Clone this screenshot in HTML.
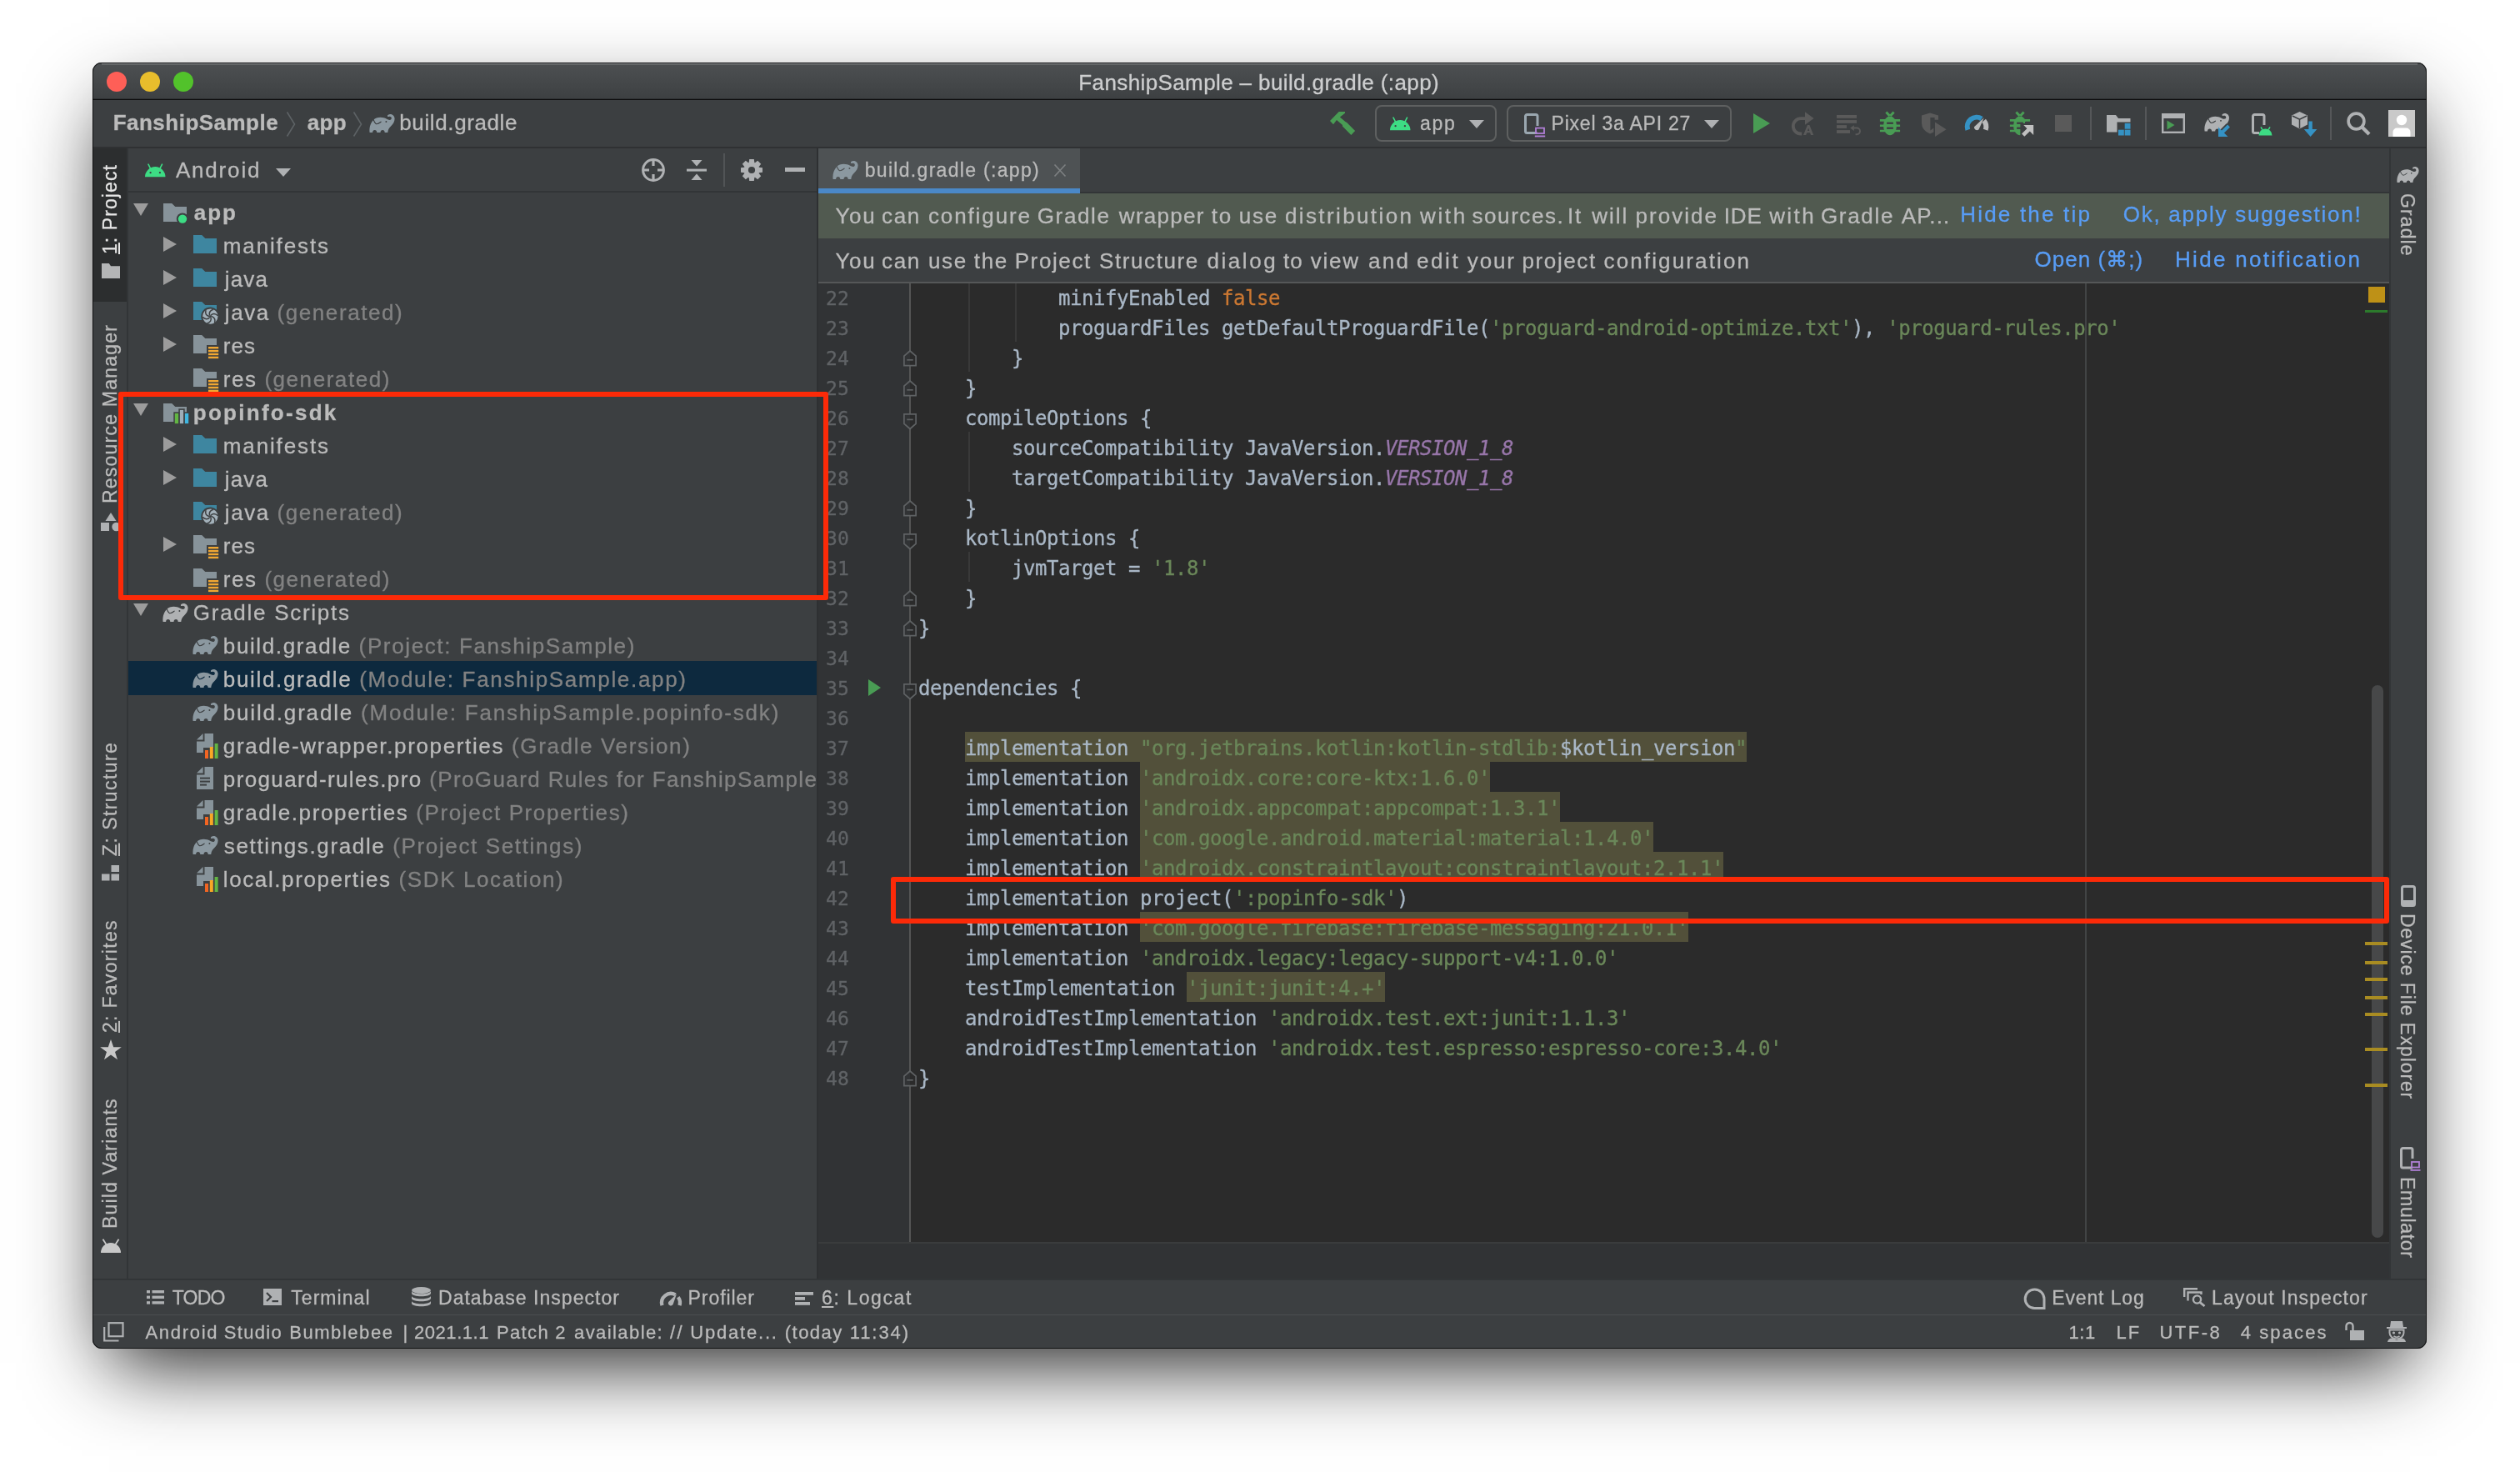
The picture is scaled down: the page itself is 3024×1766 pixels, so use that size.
<!DOCTYPE html>
<html lang="en"><head><meta charset="utf-8"><title>FanshipSample – build.gradle (:app)</title>
<style>
html,body{margin:0;padding:0;background:#ffffff;}
body{width:3024px;height:1766px;position:relative;}
#page{position:absolute;left:0;top:0;width:3024px;height:1766px;overflow:hidden;background:#ffffff;will-change:transform;}
#page div,#page svg{position:absolute;}
#page svg{overflow:visible;}
.t{font-family:"Liberation Sans",sans-serif;line-height:1;white-space:pre;-webkit-text-stroke:0.3px;}
.m{font-family:"DejaVu Sans Mono","Liberation Mono",monospace;letter-spacing:-0.448px;}
.rot{transform-origin:0 0;}
#win{left:111px;top:75px;width:2801px;height:1543px;border-radius:11px;background:#3c3f41;
 box-shadow:0 37px 92px -20px rgba(0,0,0,.9);}
#clip{left:111px;top:75px;width:2801px;height:1543px;border-radius:11px;overflow:hidden;}
#clip>#inner{left:-111px;top:-75px;width:3024px;height:1766px;}
.code{font-family:"DejaVu Sans Mono","Liberation Mono",monospace;font-size:24px;letter-spacing:-0.448px;line-height:36px;height:36px;white-space:pre;color:#a9b7c6;-webkit-text-stroke:0.3px;}
.code span{display:inline-block;height:36px;}
.code .s{color:#6a8759}.code .k{color:#cc7832}.code .p{color:#9876aa;font-style:italic}
.code .h{background:#52503a}
.ln{font-family:"DejaVu Sans Mono","Liberation Mono",monospace;font-size:23px;letter-spacing:0.15px;line-height:36px;height:36px;color:#606366;text-align:right;width:60px;-webkit-text-stroke:0.3px;}

</style></head>
<body>
<div id="page">
<div id="win"></div>
<div id="clip"><div id="inner">
<div style="left:111px;top:75px;width:2801px;height:44px;background:linear-gradient(#4d5052,#3d4042);"></div>
<div style="left:111px;top:118px;width:2801px;height:1px;background:#2e3032;"></div>
<div style="left:111px;top:119px;width:2801px;height:1px;background:#0e0e0e;"></div>
<div style="left:128px;top:86px;width:24px;height:24px;background:#fe5f57;border-radius:50%;"></div>
<div style="left:168px;top:86px;width:24px;height:24px;background:#e8bd2c;border-radius:50%;"></div>
<div style="left:208px;top:86px;width:24px;height:24px;background:#52c22b;border-radius:50%;"></div>
<div class="t " style="left:1294.3px;top:86px;font-size:26px;color:#cdcecf;font-weight:400;letter-spacing:0.389px;">FanshipSample – build.gradle (:app)</div>
<div style="left:111px;top:120px;width:2801px;height:56px;background:#3c3f41;"></div>
<div style="left:111px;top:176px;width:2801px;height:2px;background:#2f3133;"></div>
<div class="t " style="left:135.7px;top:134px;font-size:26px;color:#bbbbbb;font-weight:700;letter-spacing:0.484px;">FanshipSample</div>
<svg style="left:344px;top:134px;" width="10" height="30" viewBox="0 0 10 30"><path d="M0.5 0.5L9.5 15L0.5 29.5" fill="none" stroke="#5d6265" stroke-width="1.6"/></svg>
<div class="t " style="left:368.8px;top:134px;font-size:26px;color:#bbbbbb;font-weight:700;letter-spacing:0.279px;">app</div>
<svg style="left:424px;top:134px;" width="10" height="30" viewBox="0 0 10 30"><path d="M0.5 0.5L9.5 15L0.5 29.5" fill="none" stroke="#5d6265" stroke-width="1.6"/></svg>
<svg style="left:443px;top:137px;" width="31.0" height="22.0" viewBox="0 0 31 22"><path d="M0.6 22C0 17 1 11.5 5 7C8 4 13 3 17.5 4.3C20 5 21.5 6.3 23.5 6.8C25.5 7.3 27 6.2 26.8 4.6C26.6 3 25 2.3 23.6 2.9C22.8 3.2 22 3 21.9 2.2C21.8 1 23.5 0 25.2 0C28.5 0 30.6 2.5 30.6 5.5C30.6 9 28.5 12 26 14.5C23.5 17 22.5 19 22.3 22L18.7 22C18.7 20 17.6 19 16.1 19C14.6 19 13.5 20 13.5 22L9.3 22C9.3 20 8.2 19 6.7 19C5.2 19 4.1 20 4.1 22Z" fill="#8b98a0"/><path d="M5.1 6.5C5.8 8.6 6.8 10.4 8.2 11.6C9.6 12.2 12 10.8 14.1 9.2" fill="none" stroke="#3c3f41" stroke-width="1.1" stroke-linecap="round"/><circle cx="20.4" cy="9" r="0.95" fill="#3c3f41"/></svg>
<div class="t " style="left:479.3px;top:134px;font-size:26px;color:#bbbbbb;font-weight:400;letter-spacing:0.612px;">build.gradle</div>
<div style="left:111px;top:178px;width:42px;height:1357px;background:#3c3f41;"></div>
<div style="left:152px;top:178px;width:2px;height:1357px;background:#323537;"></div>
<div style="left:112px;top:178px;width:40px;height:184px;background:#2c2e2f;"></div>
<div class="t rot" style="left:121px;top:305px;font-size:23px;color:#e6e6e6;letter-spacing:1.082px;transform:rotate(-90deg);"><u>1</u>: Project</div>
<svg style="left:122px;top:316px;" width="22" height="18" viewBox="0 0 22 18"><path d="M0 0H8.8L11 3.2H22V18H0Z" fill="#b4b5b6"/></svg>
<div class="t rot" style="left:121px;top:604.3px;font-size:23px;color:#bbbbbb;letter-spacing:1.224px;transform:rotate(-90deg);">Resource Manager</div>
<svg style="left:121px;top:615px;" width="24" height="22" viewBox="0 0 24 22"><path d="M12 0L18.5 10H5.5Z" fill="#afb1b3"/><rect x="0" y="12" width="10" height="10" fill="#afb1b3"/><circle cx="18.5" cy="17" r="5.2" fill="#afb1b3"/></svg>
<div class="t rot" style="left:121px;top:1026.5px;font-size:23px;color:#bbbbbb;letter-spacing:1.432px;transform:rotate(-90deg);"><u>Z</u>: Structure</div>
<svg style="left:122px;top:1038px;" width="22" height="19" viewBox="0 0 22 19"><rect x="11.5" y="0" width="9.5" height="8" fill="#afb1b3"/><rect x="0" y="10.5" width="9.5" height="8" fill="#afb1b3"/><rect x="11.5" y="10.5" width="9.5" height="8" fill="#afb1b3"/></svg>
<div class="t rot" style="left:121px;top:1239px;font-size:23px;color:#bbbbbb;letter-spacing:1.304px;transform:rotate(-90deg);"><u>2</u>: Favorites</div>
<svg style="left:120px;top:1247px;" width="26" height="25" viewBox="0 0 26 25"><path d="M13 0L16.2 9.2H25.8L18 14.9L21 24.3L13 18.6L5 24.3L8 14.9L0.2 9.2H9.8Z" fill="#c8c8c8"/></svg>
<div class="t rot" style="left:121px;top:1473.7px;font-size:23px;color:#bbbbbb;letter-spacing:1.177px;transform:rotate(-90deg);">Build Variants</div>
<svg style="left:121px;top:1486px;" width="24" height="17" viewBox="0 0 24 17"><path d="M0 17A12 12 0 0 1 24 17Z" fill="#c8c8c8"/><path d="M6.5 7L2.5 0.8M17.5 7L21.5 0.8" stroke="#c8c8c8" stroke-width="1.8" fill="none"/></svg>
<div style="left:154px;top:178px;width:826px;height:1357px;background:#3c3f41;"></div>
<div style="left:154px;top:229px;width:826px;height:2px;background:#323537;"></div>
<svg style="left:174px;top:196px;" width="24.5" height="16.3" viewBox="0 0 24.5 16.3"><path d="M0 16.3A12.25 12.25 0 0 1 24.5 16.3Z" fill="#3ddc84"/><path d="M6.8 6.6L4 1.2M17.7 6.6L20.5 1.2" stroke="#3ddc84" stroke-width="1.6" stroke-linecap="round" fill="none"/><circle cx="6.6" cy="11.2" r="1.15" fill="#3c3f41"/><circle cx="17.9" cy="11.2" r="1.15" fill="#3c3f41"/></svg>
<div class="t " style="left:210.9px;top:191px;font-size:26px;color:#bbbbbb;font-weight:400;letter-spacing:1.824px;">Android</div>
<svg style="left:331px;top:202px;" width="18" height="10" viewBox="0 0 18 10"><path d="M0 0H18L9.0 10Z" fill="#afb1b3"/></svg>
<svg style="left:770px;top:190px;" width="28" height="28" viewBox="0 0 28 28"><circle cx="14" cy="14" r="12.4" fill="none" stroke="#afb1b3" stroke-width="3"/><path d="M14 1V9M14 19V27M1 14H9M19 14H27" stroke="#afb1b3" stroke-width="3.2" fill="none"/></svg>
<svg style="left:824px;top:192px;" width="24" height="24" viewBox="0 0 24 24"><path d="M5.5 0H18.5L12 7.5Z" fill="#afb1b3"/><rect x="0" y="10.6" width="24" height="3" fill="#afb1b3"/><path d="M5.5 24H18.5L12 16.5Z" fill="#afb1b3"/></svg>
<div style="left:868px;top:184px;width:2px;height:40px;background:#515456;"></div>
<svg style="left:889px;top:191px;" width="26" height="26" viewBox="0 0 26 26"><g fill="#afb1b3"><circle cx="13" cy="13" r="9.4"/><path d="M10.2 0H15.8L16.6 6H9.4Z" transform="rotate(0 13 13)"/><path d="M10.2 0H15.8L16.6 6H9.4Z" transform="rotate(45 13 13)"/><path d="M10.2 0H15.8L16.6 6H9.4Z" transform="rotate(90 13 13)"/><path d="M10.2 0H15.8L16.6 6H9.4Z" transform="rotate(135 13 13)"/><path d="M10.2 0H15.8L16.6 6H9.4Z" transform="rotate(180 13 13)"/><path d="M10.2 0H15.8L16.6 6H9.4Z" transform="rotate(225 13 13)"/><path d="M10.2 0H15.8L16.6 6H9.4Z" transform="rotate(270 13 13)"/><path d="M10.2 0H15.8L16.6 6H9.4Z" transform="rotate(315 13 13)"/></g><circle cx="13" cy="13" r="4.1" fill="#3c3f41"/></svg>
<div style="left:942px;top:201px;width:24px;height:5px;background:#afb1b3;"></div>
<div style="left:154px;top:793px;width:826px;height:41px;background:#0d293e;"></div>
<div style="left:154px;top:231px;width:826px;height:1304px;overflow:hidden;"><div style="left:-154px;top:-231px;width:3024px;height:1766px;">
<svg style="left:160px;top:244px;" width="18" height="15" viewBox="0 0 18 15"><path d="M0 0H18L9.0 15Z" fill="#9c9c9c"/></svg>
<svg style="left:196px;top:244px;" width="30" height="26" viewBox="0 0 30 26"><path d="M0 0H10.2L14.3 4H28V22H0Z" fill="#87939a"/><circle cx="23" cy="18.6" r="7.2" fill="#3c3f41"/><circle cx="23" cy="18.6" r="5.2" fill="#3ddc84"/></svg>
<div class="t " style="left:232.8px;top:242px;font-size:26px;color:#bbbbbb;font-weight:700;letter-spacing:1.929px;">app</div>
<svg style="left:196px;top:284px;" width="16" height="18" viewBox="0 0 16 18"><path d="M0 0L16 9.0L0 18Z" fill="#9c9c9c"/></svg>
<svg style="left:232px;top:282px;" width="28" height="22" viewBox="0 0 28 22"><path d="M0 0H10.2L14.3 4H28V22H0Z" fill="#3e86a0"/></svg>
<div class="t " style="left:267.8px;top:282px;font-size:26px;color:#bbbbbb;font-weight:400;letter-spacing:1.867px;">manifests</div>
<svg style="left:196px;top:324px;" width="16" height="18" viewBox="0 0 16 18"><path d="M0 0L16 9.0L0 18Z" fill="#9c9c9c"/></svg>
<svg style="left:232px;top:322px;" width="28" height="22" viewBox="0 0 28 22"><path d="M0 0H10.2L14.3 4H28V22H0Z" fill="#3e86a0"/></svg>
<div class="t " style="left:269.8px;top:322px;font-size:26px;color:#bbbbbb;font-weight:400;letter-spacing:1.155px;">java</div>
<svg style="left:196px;top:364px;" width="16" height="18" viewBox="0 0 16 18"><path d="M0 0L16 9.0L0 18Z" fill="#9c9c9c"/></svg>
<svg style="left:232px;top:362px;" width="31" height="28" viewBox="0 0 31 28"><path d="M0 0H10.2L14.3 4H28V22H0Z" fill="#3e86a0"/><circle cx="20.3" cy="17.6" r="11.0" fill="#3c3f41"/><circle cx="20.3" cy="17.6" r="9.2" fill="#a3b1ba"/><path d="M21.50 17.60Q27.10 18.80 25.58 25.14" fill="none" stroke="#3c3f41" stroke-width="1.5"/><path d="M20.90 18.64Q22.66 24.08 16.41 25.94" fill="none" stroke="#3c3f41" stroke-width="1.5"/><path d="M19.70 18.64Q15.86 22.89 11.14 18.40" fill="none" stroke="#3c3f41" stroke-width="1.5"/><path d="M19.10 17.60Q13.50 16.40 15.02 10.06" fill="none" stroke="#3c3f41" stroke-width="1.5"/><path d="M19.70 16.56Q17.94 11.12 24.19 9.26" fill="none" stroke="#3c3f41" stroke-width="1.5"/><path d="M20.90 16.56Q24.74 12.31 29.46 16.80" fill="none" stroke="#3c3f41" stroke-width="1.5"/><circle cx="20.3" cy="17.6" r="1.3" fill="#3c3f41"/></svg>
<div class="t " style="left:269.8px;top:362px;font-size:26px;color:#bbbbbb;font-weight:400;letter-spacing:1.568px;">java <span style="color:#828282">(generated)</span></div>
<svg style="left:196px;top:404px;" width="16" height="18" viewBox="0 0 16 18"><path d="M0 0L16 9.0L0 18Z" fill="#9c9c9c"/></svg>
<svg style="left:232px;top:402px;" width="32" height="30" viewBox="0 0 32 30"><path d="M0 0H10.2L14.3 4H28V22H0Z" fill="#87939a"/><rect x="16" y="12" width="16" height="16" fill="#3c3f41"/><rect x="18" y="14.0" width="12.2" height="2.4" fill="#f0a732"/><rect x="18" y="17.9" width="12.2" height="2.4" fill="#f0a732"/><rect x="18" y="21.8" width="12.2" height="2.4" fill="#f0a732"/><rect x="18" y="25.7" width="12.2" height="2.4" fill="#f0a732"/></svg>
<div class="t " style="left:267.8px;top:402px;font-size:26px;color:#bbbbbb;font-weight:400;letter-spacing:0.991px;">res</div>
<svg style="left:232px;top:442px;" width="32" height="30" viewBox="0 0 32 30"><path d="M0 0H10.2L14.3 4H28V22H0Z" fill="#87939a"/><rect x="16" y="12" width="16" height="16" fill="#3c3f41"/><rect x="18" y="14.0" width="12.2" height="2.4" fill="#f0a732"/><rect x="18" y="17.9" width="12.2" height="2.4" fill="#f0a732"/><rect x="18" y="21.8" width="12.2" height="2.4" fill="#f0a732"/><rect x="18" y="25.7" width="12.2" height="2.4" fill="#f0a732"/></svg>
<div class="t " style="left:267.8px;top:442px;font-size:26px;color:#bbbbbb;font-weight:400;letter-spacing:1.557px;">res <span style="color:#828282">(generated)</span></div>
<svg style="left:160px;top:484px;" width="18" height="15" viewBox="0 0 18 15"><path d="M0 0H18L9.0 15Z" fill="#9c9c9c"/></svg>
<svg style="left:196px;top:484px;" width="32" height="26" viewBox="0 0 32 26"><path d="M0 0H10.2L14.3 4H28V22H0Z" fill="#87939a"/><rect x="12.3" y="10.3" width="20" height="15" fill="#3c3f41"/><rect x="18.3" y="6.3" width="7.4" height="6" fill="#3c3f41"/><rect x="13.8" y="11.9" width="4.3" height="12.2" fill="#62b543"/><rect x="19.9" y="7.9" width="4.2" height="16.2" fill="#9fadb7"/><rect x="25.9" y="11.9" width="4.3" height="12.2" fill="#40b6e0"/></svg>
<div class="t " style="left:231.8px;top:482px;font-size:26px;color:#bbbbbb;font-weight:700;letter-spacing:2.271px;">popinfo-sdk</div>
<svg style="left:196px;top:524px;" width="16" height="18" viewBox="0 0 16 18"><path d="M0 0L16 9.0L0 18Z" fill="#9c9c9c"/></svg>
<svg style="left:232px;top:522px;" width="28" height="22" viewBox="0 0 28 22"><path d="M0 0H10.2L14.3 4H28V22H0Z" fill="#3e86a0"/></svg>
<div class="t " style="left:267.8px;top:522px;font-size:26px;color:#bbbbbb;font-weight:400;letter-spacing:1.867px;">manifests</div>
<svg style="left:196px;top:564px;" width="16" height="18" viewBox="0 0 16 18"><path d="M0 0L16 9.0L0 18Z" fill="#9c9c9c"/></svg>
<svg style="left:232px;top:562px;" width="28" height="22" viewBox="0 0 28 22"><path d="M0 0H10.2L14.3 4H28V22H0Z" fill="#3e86a0"/></svg>
<div class="t " style="left:269.8px;top:562px;font-size:26px;color:#bbbbbb;font-weight:400;letter-spacing:1.155px;">java</div>
<svg style="left:232px;top:602px;" width="31" height="28" viewBox="0 0 31 28"><path d="M0 0H10.2L14.3 4H28V22H0Z" fill="#3e86a0"/><circle cx="20.3" cy="17.6" r="11.0" fill="#3c3f41"/><circle cx="20.3" cy="17.6" r="9.2" fill="#a3b1ba"/><path d="M21.50 17.60Q27.10 18.80 25.58 25.14" fill="none" stroke="#3c3f41" stroke-width="1.5"/><path d="M20.90 18.64Q22.66 24.08 16.41 25.94" fill="none" stroke="#3c3f41" stroke-width="1.5"/><path d="M19.70 18.64Q15.86 22.89 11.14 18.40" fill="none" stroke="#3c3f41" stroke-width="1.5"/><path d="M19.10 17.60Q13.50 16.40 15.02 10.06" fill="none" stroke="#3c3f41" stroke-width="1.5"/><path d="M19.70 16.56Q17.94 11.12 24.19 9.26" fill="none" stroke="#3c3f41" stroke-width="1.5"/><path d="M20.90 16.56Q24.74 12.31 29.46 16.80" fill="none" stroke="#3c3f41" stroke-width="1.5"/><circle cx="20.3" cy="17.6" r="1.3" fill="#3c3f41"/></svg>
<div class="t " style="left:269.8px;top:602px;font-size:26px;color:#bbbbbb;font-weight:400;letter-spacing:1.568px;">java <span style="color:#828282">(generated)</span></div>
<svg style="left:196px;top:644px;" width="16" height="18" viewBox="0 0 16 18"><path d="M0 0L16 9.0L0 18Z" fill="#9c9c9c"/></svg>
<svg style="left:232px;top:642px;" width="32" height="30" viewBox="0 0 32 30"><path d="M0 0H10.2L14.3 4H28V22H0Z" fill="#87939a"/><rect x="16" y="12" width="16" height="16" fill="#3c3f41"/><rect x="18" y="14.0" width="12.2" height="2.4" fill="#f0a732"/><rect x="18" y="17.9" width="12.2" height="2.4" fill="#f0a732"/><rect x="18" y="21.8" width="12.2" height="2.4" fill="#f0a732"/><rect x="18" y="25.7" width="12.2" height="2.4" fill="#f0a732"/></svg>
<div class="t " style="left:267.8px;top:642px;font-size:26px;color:#bbbbbb;font-weight:400;letter-spacing:0.991px;">res</div>
<svg style="left:232px;top:682px;" width="32" height="30" viewBox="0 0 32 30"><path d="M0 0H10.2L14.3 4H28V22H0Z" fill="#87939a"/><rect x="16" y="12" width="16" height="16" fill="#3c3f41"/><rect x="18" y="14.0" width="12.2" height="2.4" fill="#f0a732"/><rect x="18" y="17.9" width="12.2" height="2.4" fill="#f0a732"/><rect x="18" y="21.8" width="12.2" height="2.4" fill="#f0a732"/><rect x="18" y="25.7" width="12.2" height="2.4" fill="#f0a732"/></svg>
<div class="t " style="left:267.8px;top:682px;font-size:26px;color:#bbbbbb;font-weight:400;letter-spacing:1.557px;">res <span style="color:#828282">(generated)</span></div>
<svg style="left:160px;top:724px;" width="18" height="15" viewBox="0 0 18 15"><path d="M0 0H18L9.0 15Z" fill="#9c9c9c"/></svg>
<svg style="left:195px;top:723.5px;" width="31.0" height="22.0" viewBox="0 0 31 22"><path d="M0.6 22C0 17 1 11.5 5 7C8 4 13 3 17.5 4.3C20 5 21.5 6.3 23.5 6.8C25.5 7.3 27 6.2 26.8 4.6C26.6 3 25 2.3 23.6 2.9C22.8 3.2 22 3 21.9 2.2C21.8 1 23.5 0 25.2 0C28.5 0 30.6 2.5 30.6 5.5C30.6 9 28.5 12 26 14.5C23.5 17 22.5 19 22.3 22L18.7 22C18.7 20 17.6 19 16.1 19C14.6 19 13.5 20 13.5 22L9.3 22C9.3 20 8.2 19 6.7 19C5.2 19 4.1 20 4.1 22Z" fill="#afb1b3"/><path d="M5.1 6.5C5.8 8.6 6.8 10.4 8.2 11.6C9.6 12.2 12 10.8 14.1 9.2" fill="none" stroke="#3c3f41" stroke-width="1.1" stroke-linecap="round"/><circle cx="20.4" cy="9" r="0.95" fill="#3c3f41"/></svg>
<div class="t " style="left:231.8px;top:722px;font-size:26px;color:#bbbbbb;font-weight:400;letter-spacing:1.729px;">Gradle Scripts</div>
<svg style="left:231px;top:763px;" width="31.0" height="22.0" viewBox="0 0 31 22"><path d="M0.6 22C0 17 1 11.5 5 7C8 4 13 3 17.5 4.3C20 5 21.5 6.3 23.5 6.8C25.5 7.3 27 6.2 26.8 4.6C26.6 3 25 2.3 23.6 2.9C22.8 3.2 22 3 21.9 2.2C21.8 1 23.5 0 25.2 0C28.5 0 30.6 2.5 30.6 5.5C30.6 9 28.5 12 26 14.5C23.5 17 22.5 19 22.3 22L18.7 22C18.7 20 17.6 19 16.1 19C14.6 19 13.5 20 13.5 22L9.3 22C9.3 20 8.2 19 6.7 19C5.2 19 4.1 20 4.1 22Z" fill="#8b98a0"/><path d="M5.1 6.5C5.8 8.6 6.8 10.4 8.2 11.6C9.6 12.2 12 10.8 14.1 9.2" fill="none" stroke="#3c3f41" stroke-width="1.1" stroke-linecap="round"/><circle cx="20.4" cy="9" r="0.95" fill="#3c3f41"/></svg>
<div class="t " style="left:267.8px;top:762px;font-size:26px;color:#bbbbbb;font-weight:400;letter-spacing:1.627px;">build.gradle <span style="color:#828282">(Project: FanshipSample)</span></div>
<svg style="left:231px;top:803px;" width="31.0" height="22.0" viewBox="0 0 31 22"><path d="M0.6 22C0 17 1 11.5 5 7C8 4 13 3 17.5 4.3C20 5 21.5 6.3 23.5 6.8C25.5 7.3 27 6.2 26.8 4.6C26.6 3 25 2.3 23.6 2.9C22.8 3.2 22 3 21.9 2.2C21.8 1 23.5 0 25.2 0C28.5 0 30.6 2.5 30.6 5.5C30.6 9 28.5 12 26 14.5C23.5 17 22.5 19 22.3 22L18.7 22C18.7 20 17.6 19 16.1 19C14.6 19 13.5 20 13.5 22L9.3 22C9.3 20 8.2 19 6.7 19C5.2 19 4.1 20 4.1 22Z" fill="#8b98a0"/><path d="M5.1 6.5C5.8 8.6 6.8 10.4 8.2 11.6C9.6 12.2 12 10.8 14.1 9.2" fill="none" stroke="#0d293e" stroke-width="1.1" stroke-linecap="round"/><circle cx="20.4" cy="9" r="0.95" fill="#0d293e"/></svg>
<div class="t " style="left:267.8px;top:802px;font-size:26px;color:#bbbbbb;font-weight:400;letter-spacing:1.672px;">build.gradle <span style="color:#828282">(Module: FanshipSample.app)</span></div>
<svg style="left:231px;top:843px;" width="31.0" height="22.0" viewBox="0 0 31 22"><path d="M0.6 22C0 17 1 11.5 5 7C8 4 13 3 17.5 4.3C20 5 21.5 6.3 23.5 6.8C25.5 7.3 27 6.2 26.8 4.6C26.6 3 25 2.3 23.6 2.9C22.8 3.2 22 3 21.9 2.2C21.8 1 23.5 0 25.2 0C28.5 0 30.6 2.5 30.6 5.5C30.6 9 28.5 12 26 14.5C23.5 17 22.5 19 22.3 22L18.7 22C18.7 20 17.6 19 16.1 19C14.6 19 13.5 20 13.5 22L9.3 22C9.3 20 8.2 19 6.7 19C5.2 19 4.1 20 4.1 22Z" fill="#8b98a0"/><path d="M5.1 6.5C5.8 8.6 6.8 10.4 8.2 11.6C9.6 12.2 12 10.8 14.1 9.2" fill="none" stroke="#3c3f41" stroke-width="1.1" stroke-linecap="round"/><circle cx="20.4" cy="9" r="0.95" fill="#3c3f41"/></svg>
<div class="t " style="left:267.8px;top:842px;font-size:26px;color:#bbbbbb;font-weight:400;letter-spacing:1.819px;">build.gradle <span style="color:#828282">(Module: FanshipSample.popinfo-sdk)</span></div>
<svg style="left:236px;top:880px;" width="27" height="30" viewBox="0 0 27 30"><path d="M9.5 0H20V23H0V9.5H9.5Z" fill="#87939a"/><path d="M7.6 0V7.6H0Z" fill="#87939a"/><rect x="8" y="17" width="19" height="14" fill="#3c3f41"/><rect x="10" y="20" width="4" height="10" fill="#f26522"/><rect x="15.8" y="16" width="4" height="14" fill="#f9a825"/><rect x="14" y="14" width="14" height="3.5" fill="#3c3f41" opacity="0"/><rect x="21.6" y="12" width="4" height="18" fill="#62b543"/></svg>
<div class="t " style="left:267.8px;top:882px;font-size:26px;color:#bbbbbb;font-weight:400;letter-spacing:1.641px;">gradle-wrapper.properties <span style="color:#828282">(Gradle Version)</span></div>
<svg style="left:236px;top:920px;" width="20" height="27" viewBox="0 0 20 27"><path d="M9.5 0H20V27H0V9.5H9.5Z" fill="#87939a"/><path d="M7.6 0V7.6H0Z" fill="#87939a"/><rect x="4" y="12.6" width="12" height="2" fill="#3c3f41"/><rect x="4" y="16.6" width="12" height="2" fill="#3c3f41"/><rect x="4" y="20.6" width="8" height="2" fill="#3c3f41"/></svg>
<div class="t " style="left:267.8px;top:922px;font-size:26px;color:#bbbbbb;font-weight:400;letter-spacing:1.383px;">proguard-rules.pro <span style="color:#828282">(ProGuard Rules for FanshipSample.app)</span></div>
<svg style="left:236px;top:960px;" width="27" height="30" viewBox="0 0 27 30"><path d="M9.5 0H20V23H0V9.5H9.5Z" fill="#87939a"/><path d="M7.6 0V7.6H0Z" fill="#87939a"/><rect x="8" y="17" width="19" height="14" fill="#3c3f41"/><rect x="10" y="20" width="4" height="10" fill="#f26522"/><rect x="15.8" y="16" width="4" height="14" fill="#f9a825"/><rect x="14" y="14" width="14" height="3.5" fill="#3c3f41" opacity="0"/><rect x="21.6" y="12" width="4" height="18" fill="#62b543"/></svg>
<div class="t " style="left:267.8px;top:962px;font-size:26px;color:#bbbbbb;font-weight:400;letter-spacing:1.618px;">gradle.properties <span style="color:#828282">(Project Properties)</span></div>
<svg style="left:231px;top:1003px;" width="31.0" height="22.0" viewBox="0 0 31 22"><path d="M0.6 22C0 17 1 11.5 5 7C8 4 13 3 17.5 4.3C20 5 21.5 6.3 23.5 6.8C25.5 7.3 27 6.2 26.8 4.6C26.6 3 25 2.3 23.6 2.9C22.8 3.2 22 3 21.9 2.2C21.8 1 23.5 0 25.2 0C28.5 0 30.6 2.5 30.6 5.5C30.6 9 28.5 12 26 14.5C23.5 17 22.5 19 22.3 22L18.7 22C18.7 20 17.6 19 16.1 19C14.6 19 13.5 20 13.5 22L9.3 22C9.3 20 8.2 19 6.7 19C5.2 19 4.1 20 4.1 22Z" fill="#8b98a0"/><path d="M5.1 6.5C5.8 8.6 6.8 10.4 8.2 11.6C9.6 12.2 12 10.8 14.1 9.2" fill="none" stroke="#3c3f41" stroke-width="1.1" stroke-linecap="round"/><circle cx="20.4" cy="9" r="0.95" fill="#3c3f41"/></svg>
<div class="t " style="left:268.8px;top:1002px;font-size:26px;color:#bbbbbb;font-weight:400;letter-spacing:1.634px;">settings.gradle <span style="color:#828282">(Project Settings)</span></div>
<svg style="left:236px;top:1040px;" width="27" height="30" viewBox="0 0 27 30"><path d="M9.5 0H20V23H0V9.5H9.5Z" fill="#87939a"/><path d="M7.6 0V7.6H0Z" fill="#87939a"/><rect x="8" y="17" width="19" height="14" fill="#3c3f41"/><rect x="10" y="20" width="4" height="10" fill="#f26522"/><rect x="15.8" y="16" width="4" height="14" fill="#f9a825"/><rect x="14" y="14" width="14" height="3.5" fill="#3c3f41" opacity="0"/><rect x="21.6" y="12" width="4" height="18" fill="#62b543"/></svg>
<div class="t " style="left:267.8px;top:1042px;font-size:26px;color:#bbbbbb;font-weight:400;letter-spacing:1.601px;">local.properties <span style="color:#828282">(SDK Location)</span></div>
</div></div>
<div style="left:980px;top:178px;width:2px;height:1357px;background:#2e3032;"></div>
<svg style="left:1590px;top:130px;" width="40" height="36" viewBox="1590 130 40 36"><path d="M1596 144.9L1600 149.2L1604 144L1611 150V151.6L1621.4 162L1626.1 157.1L1616.2 147L1614.4 146.1L1607.9 140.6L1614 135.7V133.9H1606.7Z" fill="#499c54"/></svg>
<div style="left:1650px;top:126px;width:146px;height:44px;background:transparent;box-sizing:border-box;border:2px solid #5e6060;border-radius:8px;"></div>
<svg style="left:1668px;top:140px;" width="24.5" height="16.3" viewBox="0 0 24.5 16.3"><path d="M0 16.3A12.25 12.25 0 0 1 24.5 16.3Z" fill="#3ddc84"/><path d="M6.8 6.6L4 1.2M17.7 6.6L20.5 1.2" stroke="#3ddc84" stroke-width="1.6" stroke-linecap="round" fill="none"/><circle cx="6.6" cy="11.2" r="1.15" fill="#3c3f41"/><circle cx="17.9" cy="11.2" r="1.15" fill="#3c3f41"/></svg>
<div class="t " style="left:1704px;top:137px;font-size:23px;color:#bbbbbb;font-weight:400;letter-spacing:1.708px;">app</div>
<svg style="left:1763px;top:144px;" width="18" height="10" viewBox="0 0 18 10"><path d="M0 0H18L9.0 10Z" fill="#afb1b3"/></svg>
<div style="left:1808px;top:126px;width:270px;height:44px;background:transparent;box-sizing:border-box;border:2px solid #5e6060;border-radius:8px;"></div>
<svg style="left:1829px;top:136px;" width="26" height="30" viewBox="0 0 26 30"><path d="M15.5 23.5H3.5A2 2 0 0 1 1.5 21.5V3.5A2 2 0 0 1 3.5 1.5H14A2 2 0 0 1 16 3.5V15" fill="none" stroke="#9aa7b0" stroke-width="3"/><rect x="14" y="17.6" width="10" height="6.4" fill="none" stroke="#b07fd6" stroke-width="1.8"/><rect x="12.8" y="26.5" width="12.4" height="1.9" fill="#b07fd6"/></svg>
<div class="t " style="left:1861.6px;top:137px;font-size:23px;color:#bbbbbb;font-weight:400;letter-spacing:0.767px;">Pixel 3a API 27</div>
<svg style="left:2045px;top:144px;" width="18" height="10" viewBox="0 0 18 10"><path d="M0 0H18L9.0 10Z" fill="#afb1b3"/></svg>
<svg style="left:2104px;top:136px;" width="20" height="24" viewBox="0 0 20 24"><path d="M0 0L20 12L0 24Z" fill="#499c54"/></svg>
<svg style="left:2146px;top:130px;" width="36" height="36" viewBox="2146 130 36 36"><path d="M2166.5 142.1H2161A9.2 9.2 0 0 0 2161 160.5H2162.2" fill="none" stroke="#5a5a5a" stroke-width="3.8"/><path d="M2166 134.2L2176.6 141.9L2166 149.8Z" fill="#5a5a5a"/><path d="M2164 161.9L2169 150H2171.4L2176.2 161.9H2173L2172 159.2H2168.2L2167.2 161.9ZM2169 157H2171.3L2170.15 153.6Z" fill="#5a5a5a"/></svg>
<svg style="left:2200px;top:134px;" width="36" height="32" viewBox="2200 134 36 32"><rect x="2204" y="138" width="24" height="3.8" fill="#5a5a5a"/><rect x="2204" y="144.05" width="24" height="3.8" fill="#5a5a5a"/><rect x="2204" y="150.1" width="12" height="3.8" fill="#5a5a5a"/><rect x="2204" y="156.1" width="16" height="3.8" fill="#5a5a5a"/><path d="M2224.5 153.6H2228.2A3.8 3.8 0 0 1 2228.2 161.2H2226.6" fill="none" stroke="#5a5a5a" stroke-width="2"/><path d="M2220.2 153.6L2224.9 150.3V156.9Z" fill="#5a5a5a"/></svg>
<svg style="left:2250px;top:130px;" width="40" height="38" viewBox="2250 130 40 38"><ellipse cx="2268" cy="150.8" rx="8" ry="11.4" fill="#499c54"/><path d="M2263.4 134.4L2267.6 138.9M2272.6 134.4L2268.4 138.9" stroke="#499c54" stroke-width="3" fill="none"/><path d="M2255.9 144.4H2280.1M2255.9 150.7H2280.1M2255.9 157H2280.1" stroke="#499c54" stroke-width="2.6" fill="none"/><rect x="2264.1" y="146.6" width="7.8" height="2.3" fill="#3c3f41"/><rect x="2264.1" y="152.6" width="7.8" height="2.3" fill="#3c3f41"/></svg>
<svg style="left:2300px;top:130px;" width="40" height="38" viewBox="2300 130 40 38"><path d="M2306 138.6L2316 135.6L2326 138.6V143.8H2321.6V141H2316.4V156.4L2320.4 153.6V158.4L2316 160.4Q2306 156.4 2306 147.4Z" fill="#5a5a5a"/><path d="M2322 146.4L2335.6 155.2L2322 164Z" fill="#5a5a5a"/></svg>
<svg style="left:2354px;top:134px;" width="36" height="26" viewBox="2354 134 36 26"><path d="M2361.32 155.68A11.3 11.3 0 0 1 2377.99 142.42" fill="none" stroke="#3592c4" stroke-width="6"/><path d="M2380.66 144.74A11.3 11.3 0 0 1 2382.68 155.68" fill="none" stroke="#b9babb" stroke-width="6"/><path d="M2380.8 141.2L2374.6 155.2A3.3 3.3 0 0 1 2369 152.2Z" fill="#b9babb"/></svg>
<svg style="left:2406px;top:130px;" width="40" height="38" viewBox="2406 130 40 38"><ellipse cx="2424" cy="150.8" rx="8" ry="11.4" fill="#499c54"/><path d="M2419.4 134.4L2423.6 138.9M2428.6 134.4L2424.4 138.9" stroke="#499c54" stroke-width="3" fill="none"/><path d="M2411.9 144.4H2436.1M2411.9 150.7H2436.1M2411.9 157H2436.1" stroke="#499c54" stroke-width="2.6" fill="none"/><rect x="2420.1" y="146.6" width="7.8" height="2.3" fill="#3c3f41"/><rect x="2420.1" y="152.6" width="7.8" height="2.3" fill="#3c3f41"/><path d="M2424.4 148H2430V146H2442V166H2424.4Z" fill="#3c3f41"/><path d="M2427.7 162.2L2436 154" stroke="#c0c0c0" stroke-width="4.6" fill="none"/><path d="M2428.3 150H2440.2V161.9Z" fill="#c0c0c0"/></svg>
<div style="left:2466px;top:138px;width:20px;height:20px;background:#5a5a5a;"></div>
<div style="left:2508px;top:128px;width:2px;height:40px;background:#555759;"></div>
<svg style="left:2528px;top:138px;" width="29" height="25" viewBox="0 0 29 25"><path d="M0 0H11L14 4H28.5V20.5H0Z" fill="#afb1b3"/><rect x="12.5" y="8.5" width="17" height="17" fill="#3c3f41"/><rect x="21.7" y="9.9" width="6.8" height="6.8" fill="#3592c4"/><rect x="14" y="17.7" width="6.8" height="6.8" fill="#3592c4"/><rect x="21.7" y="17.7" width="6.8" height="6.8" fill="#3592c4"/></svg>
<div style="left:2574px;top:128px;width:2px;height:40px;background:#555759;"></div>
<svg style="left:2594px;top:136px;" width="28" height="24" viewBox="0 0 28 24"><rect x="1.2" y="1.2" width="25.6" height="21.6" fill="none" stroke="#afb1b3" stroke-width="2.4"/><rect x="1" y="1" width="26" height="5" fill="#afb1b3"/><path d="M6.5 8.5L15.5 14L6.5 19.5Z" fill="#499c54"/></svg>
<svg style="left:2645px;top:136px;" width="32" height="28" viewBox="0 0 32 28"><g transform="scale(0.98)"><path d="M0.6 22C0 17 1 11.5 5 7C8 4 13 3 17.5 4.3C20 5 21.5 6.3 23.5 6.8C25.5 7.3 27 6.2 26.8 4.6C26.6 3 25 2.3 23.6 2.9C22.8 3.2 22 3 21.9 2.2C21.8 1 23.5 0 25.2 0C28.5 0 30.6 2.5 30.6 5.5C30.6 9 28.5 12 26 14.5C23.5 17 22.5 19 22.3 22L18.7 22C18.7 20 17.6 19 16.1 19C14.6 19 13.5 20 13.5 22L9.3 22C9.3 20 8.2 19 6.7 19C5.2 19 4.1 20 4.1 22Z" fill="#afb1b3"/><path d="M5.1 6.5C5.8 8.6 6.8 10.4 8.2 11.6C9.6 12.2 12 10.8 14.1 9.2" fill="none" stroke="#3c3f41" stroke-width="1.1"/><circle cx="20.4" cy="9" r="0.95" fill="#3c3f41"/></g><path d="M14 10H33V29H14Z" fill="#3c3f41" opacity="0"/><path d="M19.5 25L29.5 15" stroke="#3c3f41" stroke-width="8" fill="none"/><path d="M19.5 25L29.5 15" stroke="#3592c4" stroke-width="4" fill="none"/><path d="M17 16.5V28H28.5Z" fill="#3592c4"/></svg>
<svg style="left:2702px;top:136px;" width="25" height="27" viewBox="0 0 25 27"><path d="M9 23.5H3.5A2 2 0 0 1 1.5 21.5V3.5A2 2 0 0 1 3.5 1.5H13A2 2 0 0 1 15 3.5V14" fill="none" stroke="#afb1b3" stroke-width="3"/><path d="M8.5 26.5A8 8 0 0 1 24.5 26.5Z" fill="#3ddc84"/><path d="M12.8 19.5L11 16.4M20.2 19.5L22 16.4" stroke="#3ddc84" stroke-width="1.5" fill="none"/></svg>
<svg style="left:2750px;top:134px;" width="31" height="31" viewBox="0 0 31 31"><path d="M9.5 0L19 4.5V15.5L9.5 20.5L0 15.5V4.5Z" fill="#afb1b3"/><path d="M0.8 5L9.5 9.2L18.2 5M9.5 9.2V20" stroke="#3c3f41" stroke-width="1.5" fill="none"/><rect x="14" y="10" width="17" height="21" fill="#3c3f41" opacity="0"/><rect x="20.4" y="11.5" width="4.4" height="12" fill="#3592c4"/><path d="M14.8 21H30.4L22.6 30Z" fill="#3592c4"/></svg>
<div style="left:2796px;top:128px;width:2px;height:40px;background:#555759;"></div>
<svg style="left:2816px;top:134px;" width="29" height="29" viewBox="0 0 29 29"><circle cx="11.5" cy="11.5" r="9.4" fill="none" stroke="#afb1b3" stroke-width="3.6"/><path d="M18.5 18.5L27 27" stroke="#afb1b3" stroke-width="4.2" fill="none"/></svg>
<svg style="left:2866px;top:132px;" width="32" height="32" viewBox="0 0 32 32"><rect width="32" height="32" fill="#c9c9c9"/><circle cx="16" cy="12" r="6.2" fill="#ffffff"/><path d="M5.5 32V26.5A5 5 0 0 1 10.5 21.5H21.5A5 5 0 0 1 26.5 26.5V32Z" fill="#ffffff"/></svg>
<div style="left:982px;top:178px;width:1886px;height:54px;background:#3c3f41;"></div>
<div style="left:982px;top:230px;width:1886px;height:2px;background:#323537;"></div>
<div style="left:982px;top:178px;width:314px;height:48px;background:#4e5254;"></div>
<div style="left:982px;top:226px;width:314px;height:6px;background:#4a88c7;"></div>
<svg style="left:999px;top:193px;" width="31.0" height="22.0" viewBox="0 0 31 22"><path d="M0.6 22C0 17 1 11.5 5 7C8 4 13 3 17.5 4.3C20 5 21.5 6.3 23.5 6.8C25.5 7.3 27 6.2 26.8 4.6C26.6 3 25 2.3 23.6 2.9C22.8 3.2 22 3 21.9 2.2C21.8 1 23.5 0 25.2 0C28.5 0 30.6 2.5 30.6 5.5C30.6 9 28.5 12 26 14.5C23.5 17 22.5 19 22.3 22L18.7 22C18.7 20 17.6 19 16.1 19C14.6 19 13.5 20 13.5 22L9.3 22C9.3 20 8.2 19 6.7 19C5.2 19 4.1 20 4.1 22Z" fill="#8b98a0"/><path d="M5.1 6.5C5.8 8.6 6.8 10.4 8.2 11.6C9.6 12.2 12 10.8 14.1 9.2" fill="none" stroke="#4e5254" stroke-width="1.1" stroke-linecap="round"/><circle cx="20.4" cy="9" r="0.95" fill="#4e5254"/></svg>
<div class="t " style="left:1037.7px;top:193px;font-size:23px;color:#bbbbbb;font-weight:400;letter-spacing:1.309px;">build.gradle (:app)</div>
<svg style="left:1265px;top:197px;" width="14" height="15" viewBox="0 0 14 15"><path d="M0.5 0.5L13.5 14.5M13.5 0.5L0.5 14.5" stroke="#7d8082" stroke-width="1.6" fill="none"/></svg>
<div style="left:982px;top:232px;width:1886px;height:54px;background:#515a50;"></div>
<div class="t " style="left:1002.4px;top:246px;font-size:26px;color:#bbbbbb;font-weight:400;letter-spacing:1.7px;"><span style="letter-spacing:1.700px;">You </span><span style="margin-left:-2.30px;letter-spacing:1.700px;">can </span><span style="margin-left:-0.04px;letter-spacing:1.888px;">configure </span><span style="margin-left:-2.26px;letter-spacing:1.644px;">Gradle </span><span style="margin-left:1.33px;letter-spacing:1.288px;">wrapper </span><span style="margin-left:-0.46px;letter-spacing:1.700px;">to </span><span style="margin-left:-1.11px;letter-spacing:1.700px;">use </span><span style="margin-left:-0.84px;letter-spacing:2.393px;">distribution </span><span style="margin-left:-1.87px;letter-spacing:2.600px;">with </span><span style="margin-left:-4.06px;letter-spacing:1.566px;">sources. </span><span style="margin-left:-5.08px;letter-spacing:1.700px;">It </span><span style="margin-left:2.33px;letter-spacing:1.990px;">will </span><span style="margin-left:-0.98px;letter-spacing:2.048px;">provide </span><span style="margin-left:-2.58px;letter-spacing:0.800px;">IDE </span><span style="margin-left:0.63px;letter-spacing:2.408px;">with </span><span style="margin-left:-3.80px;letter-spacing:1.704px;">Gradle </span><span style="margin-left:-0.39px;letter-spacing:1.155px;">AP...</span></div>
<div class="t " style="left:2352.3px;top:244px;font-size:26px;color:#589df6;font-weight:400;letter-spacing:2.185px;">Hide the tip</div>
<div class="t " style="left:2547.7px;top:244px;font-size:26px;color:#589df6;font-weight:400;letter-spacing:1.744px;">Ok, apply suggestion!</div>
<div style="left:982px;top:286px;width:1886px;height:52px;background:#3c3f41;"></div>
<div style="left:982px;top:338px;width:1886px;height:2px;background:#555758;"></div>
<div class="t " style="left:1002.4px;top:300px;font-size:26px;color:#bbbbbb;font-weight:400;letter-spacing:1.7px;"><span style="letter-spacing:1.700px;">You </span><span style="margin-left:-2.30px;letter-spacing:1.700px;">can </span><span style="margin-left:-0.04px;letter-spacing:1.700px;">use </span><span style="margin-left:-1.14px;letter-spacing:1.700px;">the </span><span style="margin-left:-1.27px;letter-spacing:1.617px;">Project </span><span style="margin-left:0.22px;letter-spacing:1.609px;">Structure </span><span style="margin-left:0.60px;letter-spacing:2.600px;">dialog </span><span style="margin-left:-3.12px;letter-spacing:0.976px;">to </span><span style="margin-left:0.76px;letter-spacing:1.755px;">view </span><span style="margin-left:1.19px;letter-spacing:2.290px;">and </span><span style="margin-left:-1.76px;letter-spacing:2.600px;">edit </span><span style="margin-left:-1.34px;letter-spacing:1.893px;">your </span><span style="margin-left:-1.47px;letter-spacing:1.598px;">project </span><span style="margin-left:-0.04px;letter-spacing:2.124px;">configuration</span></div>
<div class="t " style="left:2441.6px;top:298px;font-size:26px;color:#589df6;font-weight:400;letter-spacing:1.011px;font-family:"Liberation Sans","DejaVu Sans",sans-serif;">Open (⌘;)</div>
<div class="t " style="left:2610px;top:298px;font-size:26px;color:#589df6;font-weight:400;letter-spacing:2.304px;">Hide notification</div>
<div style="left:982px;top:340px;width:1886px;height:1150px;background:#2b2b2b;"></div>
<div style="left:982px;top:340px;width:110px;height:1150px;background:#313335;"></div>
<div style="left:1091px;top:340px;width:2px;height:1150px;background:#555555;"></div>
<div style="left:2502px;top:340px;width:2px;height:1150px;background:#424445;"></div>
<div style="left:1162px;top:340px;width:2px;height:106px;background:#393939;"></div>
<div style="left:1218px;top:340px;width:2px;height:70px;background:#393939;"></div>
<div style="left:1162px;top:518px;width:2px;height:72px;background:#393939;"></div>
<div style="left:1162px;top:662px;width:2px;height:36px;background:#393939;"></div>
<div style="left:982px;top:340px;width:1886px;height:1150px;overflow:hidden;"><div style="left:-982px;top:-340px;width:3024px;height:1766px;">
<div class="ln" style="left:959px;top:340px;">22</div>
<div class="code" style="left:1102px;top:340px;">            minifyEnabled <span class="k">false</span></div>
<div class="ln" style="left:959px;top:376px;">23</div>
<div class="code" style="left:1102px;top:376px;">            proguardFiles getDefaultProguardFile(<span class="s">'proguard-android-optimize.txt'</span>), <span class="s">'proguard-rules.pro'</span></div>
<div class="ln" style="left:959px;top:412px;">24</div>
<div class="code" style="left:1102px;top:412px;">        }</div>
<div class="ln" style="left:959px;top:448px;">25</div>
<div class="code" style="left:1102px;top:448px;">    }</div>
<div class="ln" style="left:959px;top:484px;">26</div>
<div class="code" style="left:1102px;top:484px;">    compileOptions {</div>
<div class="ln" style="left:959px;top:520px;">27</div>
<div class="code" style="left:1102px;top:520px;">        sourceCompatibility JavaVersion.<span class="p">VERSION_1_8</span></div>
<div class="ln" style="left:959px;top:556px;">28</div>
<div class="code" style="left:1102px;top:556px;">        targetCompatibility JavaVersion.<span class="p">VERSION_1_8</span></div>
<div class="ln" style="left:959px;top:592px;">29</div>
<div class="code" style="left:1102px;top:592px;">    }</div>
<div class="ln" style="left:959px;top:628px;">30</div>
<div class="code" style="left:1102px;top:628px;">    kotlinOptions {</div>
<div class="ln" style="left:959px;top:664px;">31</div>
<div class="code" style="left:1102px;top:664px;">        jvmTarget = <span class="s">'1.8'</span></div>
<div class="ln" style="left:959px;top:700px;">32</div>
<div class="code" style="left:1102px;top:700px;">    }</div>
<div class="ln" style="left:959px;top:736px;">33</div>
<div class="code" style="left:1102px;top:736px;">}</div>
<div class="ln" style="left:959px;top:772px;">34</div>
<div class="ln" style="left:959px;top:808px;">35</div>
<div class="code" style="left:1102px;top:808px;">dependencies {</div>
<div class="ln" style="left:959px;top:844px;">36</div>
<div style="left:1158px;top:878px;width:938px;height:36px;background:#52503a;"></div>
<div class="ln" style="left:959px;top:880px;">37</div>
<div class="code" style="left:1102px;top:880px;">    implementation <span class="s">"org.jetbrains.kotlin:kotlin-stdlib:</span>$kotlin_version<span class="s">"</span></div>
<div style="left:1368px;top:914px;width:420px;height:36px;background:#52503a;"></div>
<div class="ln" style="left:959px;top:916px;">38</div>
<div class="code" style="left:1102px;top:916px;">    implementation <span class="s">'androidx.core:core-ktx:1.6.0'</span></div>
<div style="left:1368px;top:950px;width:504px;height:36px;background:#52503a;"></div>
<div class="ln" style="left:959px;top:952px;">39</div>
<div class="code" style="left:1102px;top:952px;">    implementation <span class="s">'androidx.appcompat:appcompat:1.3.1'</span></div>
<div style="left:1368px;top:986px;width:616px;height:36px;background:#52503a;"></div>
<div class="ln" style="left:959px;top:988px;">40</div>
<div class="code" style="left:1102px;top:988px;">    implementation <span class="s">'com.google.android.material:material:1.4.0'</span></div>
<div style="left:1368px;top:1022px;width:700px;height:36px;background:#52503a;"></div>
<div class="ln" style="left:959px;top:1024px;">41</div>
<div class="code" style="left:1102px;top:1024px;">    implementation <span class="s">'androidx.constraintlayout:constraintlayout:2.1.1'</span></div>
<div class="ln" style="left:959px;top:1060px;">42</div>
<div class="code" style="left:1102px;top:1060px;">    implementation project(<span class="s">':popinfo-sdk'</span>)</div>
<div style="left:1368px;top:1094px;width:658px;height:36px;background:#52503a;"></div>
<div class="ln" style="left:959px;top:1096px;">43</div>
<div class="code" style="left:1102px;top:1096px;">    implementation <span class="s">'com.google.firebase:firebase-messaging:21.0.1'</span></div>
<div class="ln" style="left:959px;top:1132px;">44</div>
<div class="code" style="left:1102px;top:1132px;">    implementation <span class="s">'androidx.legacy:legacy-support-v4:1.0.0'</span></div>
<div style="left:1424px;top:1166px;width:238px;height:36px;background:#52503a;"></div>
<div class="ln" style="left:959px;top:1168px;">45</div>
<div class="code" style="left:1102px;top:1168px;">    testImplementation <span class="s">'junit:junit:4.+'</span></div>
<div class="ln" style="left:959px;top:1204px;">46</div>
<div class="code" style="left:1102px;top:1204px;">    androidTestImplementation <span class="s">'androidx.test.ext:junit:1.1.3'</span></div>
<div class="ln" style="left:959px;top:1240px;">47</div>
<div class="code" style="left:1102px;top:1240px;">    androidTestImplementation <span class="s">'androidx.test.espresso:espresso-core:3.4.0'</span></div>
<div class="ln" style="left:959px;top:1276px;">48</div>
<div class="code" style="left:1102px;top:1276px;">}</div>
<svg style="left:1084px;top:420.4px;" width="16" height="20" viewBox="0 0 16 20"><path d="M0.9 18.6V7.2L8 0.9V18.6Z" fill="#313335"/><path d="M15.1 18.6V7.2L8 0.9V18.6Z" fill="#2b2b2b"/><path d="M0.9 18.6V7.2L8 1L15.1 7.2V18.6Z" fill="none" stroke="#5f6264" stroke-width="1.7"/><path d="M4.3 11.8H11.7" stroke="#5f6264" stroke-width="1.7"/></svg>
<svg style="left:1084px;top:456.4px;" width="16" height="20" viewBox="0 0 16 20"><path d="M0.9 18.6V7.2L8 0.9V18.6Z" fill="#313335"/><path d="M15.1 18.6V7.2L8 0.9V18.6Z" fill="#2b2b2b"/><path d="M0.9 18.6V7.2L8 1L15.1 7.2V18.6Z" fill="none" stroke="#5f6264" stroke-width="1.7"/><path d="M4.3 11.8H11.7" stroke="#5f6264" stroke-width="1.7"/></svg>
<svg style="left:1084px;top:600.4px;" width="16" height="20" viewBox="0 0 16 20"><path d="M0.9 18.6V7.2L8 0.9V18.6Z" fill="#313335"/><path d="M15.1 18.6V7.2L8 0.9V18.6Z" fill="#2b2b2b"/><path d="M0.9 18.6V7.2L8 1L15.1 7.2V18.6Z" fill="none" stroke="#5f6264" stroke-width="1.7"/><path d="M4.3 11.8H11.7" stroke="#5f6264" stroke-width="1.7"/></svg>
<svg style="left:1084px;top:708.4px;" width="16" height="20" viewBox="0 0 16 20"><path d="M0.9 18.6V7.2L8 0.9V18.6Z" fill="#313335"/><path d="M15.1 18.6V7.2L8 0.9V18.6Z" fill="#2b2b2b"/><path d="M0.9 18.6V7.2L8 1L15.1 7.2V18.6Z" fill="none" stroke="#5f6264" stroke-width="1.7"/><path d="M4.3 11.8H11.7" stroke="#5f6264" stroke-width="1.7"/></svg>
<svg style="left:1084px;top:744.4px;" width="16" height="20" viewBox="0 0 16 20"><path d="M0.9 18.6V7.2L8 0.9V18.6Z" fill="#313335"/><path d="M15.1 18.6V7.2L8 0.9V18.6Z" fill="#2b2b2b"/><path d="M0.9 18.6V7.2L8 1L15.1 7.2V18.6Z" fill="none" stroke="#5f6264" stroke-width="1.7"/><path d="M4.3 11.8H11.7" stroke="#5f6264" stroke-width="1.7"/></svg>
<svg style="left:1084px;top:1284.4px;" width="16" height="20" viewBox="0 0 16 20"><path d="M0.9 18.6V7.2L8 0.9V18.6Z" fill="#313335"/><path d="M15.1 18.6V7.2L8 0.9V18.6Z" fill="#2b2b2b"/><path d="M0.9 18.6V7.2L8 1L15.1 7.2V18.6Z" fill="none" stroke="#5f6264" stroke-width="1.7"/><path d="M4.3 11.8H11.7" stroke="#5f6264" stroke-width="1.7"/></svg>
<svg style="left:1084px;top:496.2px;" width="16" height="20" viewBox="0 0 16 20"><path d="M0.9 0.9V12.3L8 18.6V0.9Z" fill="#313335"/><path d="M15.1 0.9V12.3L8 18.6V0.9Z" fill="#2b2b2b"/><path d="M0.9 0.9V12.3L8 18.5L15.1 12.3V0.9Z" fill="none" stroke="#5f6264" stroke-width="1.7"/><path d="M4.3 7.4H11.7" stroke="#5f6264" stroke-width="1.7"/></svg>
<svg style="left:1084px;top:640.2px;" width="16" height="20" viewBox="0 0 16 20"><path d="M0.9 0.9V12.3L8 18.6V0.9Z" fill="#313335"/><path d="M15.1 0.9V12.3L8 18.6V0.9Z" fill="#2b2b2b"/><path d="M0.9 0.9V12.3L8 18.5L15.1 12.3V0.9Z" fill="none" stroke="#5f6264" stroke-width="1.7"/><path d="M4.3 7.4H11.7" stroke="#5f6264" stroke-width="1.7"/></svg>
<svg style="left:1084px;top:820.2px;" width="16" height="20" viewBox="0 0 16 20"><path d="M0.9 0.9V12.3L8 18.6V0.9Z" fill="#313335"/><path d="M15.1 0.9V12.3L8 18.6V0.9Z" fill="#2b2b2b"/><path d="M0.9 0.9V12.3L8 18.5L15.1 12.3V0.9Z" fill="none" stroke="#5f6264" stroke-width="1.7"/><path d="M4.3 7.4H11.7" stroke="#5f6264" stroke-width="1.7"/></svg>
<svg style="left:1042px;top:815px;" width="15" height="20" viewBox="0 0 15 20"><path d="M0 0L15 10L0 20Z" fill="#499c54"/></svg>
</div></div>
<div style="left:2842px;top:344px;width:20px;height:19px;background:#be9117;"></div>
<div style="left:2838px;top:372px;width:27px;height:3px;background:#2c7a2c;"></div>
<div style="left:2846px;top:822px;width:14px;height:663px;background:#474849;border-radius:7px;"></div>
<div style="left:2838px;top:1130px;width:27px;height:4px;background:#a98c22;"></div>
<div style="left:2838px;top:1153px;width:27px;height:4px;background:#a98c22;"></div>
<div style="left:2838px;top:1173px;width:27px;height:4px;background:#a98c22;"></div>
<div style="left:2838px;top:1195px;width:27px;height:4px;background:#a98c22;"></div>
<div style="left:2838px;top:1215px;width:27px;height:4px;background:#a98c22;"></div>
<div style="left:2838px;top:1257px;width:27px;height:4px;background:#a98c22;"></div>
<div style="left:2838px;top:1300px;width:27px;height:4px;background:#a98c22;"></div>
<div style="left:1069px;top:1051.5px;width:1798px;height:56px;box-sizing:border-box;border:6px solid #fc2a08;border-radius:3px;"></div>
<div style="left:982px;top:1490px;width:1886px;height:2px;background:#3a3c3d;"></div>
<div style="left:982px;top:1492px;width:1886px;height:43px;background:#313335;"></div>
<div style="left:142px;top:470px;width:852px;height:250px;box-sizing:border-box;border:6px solid #fc2a08;border-radius:3px;"></div>
<div style="left:2868px;top:178px;width:44px;height:1357px;background:#3c3f41;"></div>
<div style="left:2867px;top:178px;width:2px;height:1357px;background:#323537;"></div>
<svg style="left:2875.8px;top:200.4px;" width="27.0" height="19.1" viewBox="0 0 31 22"><path d="M0.6 22C0 17 1 11.5 5 7C8 4 13 3 17.5 4.3C20 5 21.5 6.3 23.5 6.8C25.5 7.3 27 6.2 26.8 4.6C26.6 3 25 2.3 23.6 2.9C22.8 3.2 22 3 21.9 2.2C21.8 1 23.5 0 25.2 0C28.5 0 30.6 2.5 30.6 5.5C30.6 9 28.5 12 26 14.5C23.5 17 22.5 19 22.3 22L18.7 22C18.7 20 17.6 19 16.1 19C14.6 19 13.5 20 13.5 22L9.3 22C9.3 20 8.2 19 6.7 19C5.2 19 4.1 20 4.1 22Z" fill="#afb1b3"/><path d="M5.1 6.5C5.8 8.6 6.8 10.4 8.2 11.6C9.6 12.2 12 10.8 14.1 9.2" fill="none" stroke="#3c3f41" stroke-width="1.1" stroke-linecap="round"/><circle cx="20.4" cy="9" r="0.95" fill="#3c3f41"/></svg>
<div class="t rot" style="left:2900.4px;top:232px;font-size:23px;color:#bbbbbb;letter-spacing:1.112px;transform:rotate(90deg);">Gradle</div>
<svg style="left:2881px;top:1062px;" width="18" height="26" viewBox="0 0 18 26"><rect x="1.5" y="1.5" width="15" height="23" rx="2" fill="none" stroke="#afb1b3" stroke-width="3"/><rect x="3" y="18" width="12" height="5" fill="#afb1b3"/></svg>
<div class="t rot" style="left:2900.4px;top:1096px;font-size:23px;color:#bbbbbb;letter-spacing:0.867px;transform:rotate(90deg);">Device File Explorer</div>
<svg style="left:2880px;top:1376px;" width="26" height="30" viewBox="0 0 26 30"><path d="M15 25H3.5A2 2 0 0 1 1.5 23V3.5A2 2 0 0 1 3.5 1.5H13A2 2 0 0 1 15 3.5V14" fill="none" stroke="#afb1b3" stroke-width="3"/><rect x="14" y="18" width="9" height="6.5" fill="none" stroke="#b07fd6" stroke-width="1.8"/><rect x="12.5" y="27" width="12" height="1.8" fill="#b07fd6"/></svg>
<div class="t rot" style="left:2900.4px;top:1412.3px;font-size:23px;color:#bbbbbb;letter-spacing:0.704px;transform:rotate(90deg);">Emulator</div>
<div style="left:111px;top:1534px;width:2801px;height:2px;background:#323537;"></div>
<div style="left:111px;top:1536px;width:2801px;height:41px;background:#3c3f41;"></div>
<div style="left:111px;top:1577px;width:2801px;height:1px;background:#4b4e50;"></div>
<div style="left:111px;top:1578px;width:2801px;height:40px;background:#3c3f41;"></div>
<svg style="left:176px;top:1548px;" width="21" height="17" viewBox="0 0 21 17"><rect x="0" y="0" width="4" height="3.4" fill="#afb1b3"/><rect x="6.5" y="0" width="14.5" height="3.4" fill="#afb1b3"/><rect x="0" y="6.6" width="4" height="3.4" fill="#afb1b3"/><rect x="6.5" y="6.6" width="14.5" height="3.4" fill="#afb1b3"/><rect x="0" y="13.2" width="4" height="3.4" fill="#afb1b3"/><rect x="6.5" y="13.2" width="14.5" height="3.4" fill="#afb1b3"/></svg>
<div class="t " style="left:206.8px;top:1546px;font-size:23px;color:#bbbbbb;font-weight:400;letter-spacing:-0.811px;">TODO</div>
<svg style="left:316px;top:1546px;" width="22" height="20" viewBox="0 0 22 20"><rect width="22" height="20" fill="#afb1b3"/><path d="M4 5L9 10L4 15" stroke="#3c3f41" stroke-width="2.2" fill="none"/><rect x="10.5" y="14" width="7.5" height="2.2" fill="#3c3f41"/></svg>
<div class="t " style="left:349.3px;top:1546px;font-size:23px;color:#bbbbbb;font-weight:400;letter-spacing:1.042px;">Terminal</div>
<svg style="left:494px;top:1544px;" width="23" height="25" viewBox="0 0 23 25"><path d="M0 4.5C0 9.5 23 9.5 23 4.5V7.5C23 12.5 0 12.5 0 7.5Z" fill="#afb1b3"/><path d="M0 10.5C0 15.5 23 15.5 23 10.5V13.5C23 18.5 0 18.5 0 13.5Z" fill="#afb1b3"/><path d="M0 16.5C0 21.5 23 21.5 23 16.5V19.5C23 24.5 0 24.5 0 19.5Z" fill="#afb1b3"/><ellipse cx="11.5" cy="4" rx="11.5" ry="4" fill="#afb1b3"/></svg>
<div class="t " style="left:526px;top:1546px;font-size:23px;color:#bbbbbb;font-weight:400;letter-spacing:1.024px;">Database Inspector</div>
<svg style="left:790px;top:1546px;" width="32" height="24" viewBox="790 1546 32 24"><path d="M794.53 1566.10A10.95 10.95 0 0 1 810.48 1553.42" fill="none" stroke="#afb1b3" stroke-width="4.3"/><path d="M813.75 1556.31A10.95 10.95 0 0 1 815.47 1566.10" fill="none" stroke="#afb1b3" stroke-width="4.3"/><path d="M812 1552.3L807.6 1565A3.1 3.1 0 0 1 802.2 1562Z" fill="#afb1b3"/></svg>
<div class="t " style="left:825.6px;top:1546px;font-size:23px;color:#bbbbbb;font-weight:400;letter-spacing:0.915px;">Profiler</div>
<svg style="left:954px;top:1550px;" width="23" height="16" viewBox="0 0 23 16"><rect x="0" y="0" width="22" height="3.8" fill="#afb1b3"/><rect x="0" y="6" width="12" height="3.8" fill="#afb1b3"/><rect x="0" y="12" width="18" height="3.8" fill="#afb1b3"/></svg>
<div class="t " style="left:986px;top:1546px;font-size:23px;color:#bbbbbb;font-weight:400;letter-spacing:1.583px;"><u>6</u>: Logcat</div>
<svg style="left:2428px;top:1545px;" width="27" height="26" viewBox="0 0 27 26"><path d="M13.5 2A11.3 11.3 0 1 0 13.5 24.6H25V13.3A11.3 11.3 0 0 0 13.5 2Z" fill="none" stroke="#afb1b3" stroke-width="3"/></svg>
<div class="t " style="left:2462.2px;top:1546px;font-size:23px;color:#bbbbbb;font-weight:400;letter-spacing:0.877px;">Event Log</div>
<svg style="left:2620px;top:1545px;" width="27" height="23" viewBox="0 0 27 23"><path d="M1.2 11V1.2H17" fill="none" stroke="#afb1b3" stroke-width="2.4"/><path d="M5.5 15.5V5.5H21.5V8" fill="none" stroke="#afb1b3" stroke-width="2.4"/><circle cx="16.5" cy="14" r="4.6" fill="none" stroke="#afb1b3" stroke-width="2.4"/><path d="M19.8 17.3L25.5 22" stroke="#afb1b3" stroke-width="2.8"/></svg>
<div class="t " style="left:2654px;top:1546px;font-size:23px;color:#bbbbbb;font-weight:400;letter-spacing:1.107px;">Layout Inspector</div>
<svg style="left:124px;top:1586px;" width="25" height="24" viewBox="0 0 25 24"><rect x="6.5" y="1.2" width="17" height="16" fill="none" stroke="#afb1b3" stroke-width="2.2"/><path d="M1.2 6V22.5H18.5" fill="none" stroke="#afb1b3" stroke-width="2.2"/></svg>
<div class="t " style="left:174.5px;top:1588px;font-size:22px;color:#bbbbbb;font-weight:400;letter-spacing:1.45px;"><span style="letter-spacing:1.701px;">Android </span><span style="margin-left:-1.25px;letter-spacing:1.291px;">Studio </span><span style="margin-left:0.87px;letter-spacing:1.554px;">Bumblebee </span><span style="margin-left:3.44px;letter-spacing:1.450px;">| </span><span style="margin-left:-1.33px;letter-spacing:0.550px;">2021.1.1 </span><span style="margin-left:2.30px;letter-spacing:1.345px;">Patch </span><span style="margin-left:-0.34px;letter-spacing:1.450px;">2 </span><span style="margin-left:1.65px;letter-spacing:1.418px;">available: </span><span style="margin-left:0.24px;letter-spacing:2.350px;">// </span><span style="margin-left:-0.99px;letter-spacing:1.792px;">Update... </span><span style="margin-left:0.19px;letter-spacing:1.451px;">(today </span><span style="margin-left:0.39px;letter-spacing:1.936px;">11:34)</span></div>
<div class="t " style="left:2482.5px;top:1588px;font-size:22px;color:#bbbbbb;font-weight:400;letter-spacing:0.576px;">1:1</div>
<div class="t " style="left:2539.4px;top:1588px;font-size:22px;color:#bbbbbb;font-weight:400;letter-spacing:2.165px;">LF</div>
<div class="t " style="left:2591.4px;top:1588px;font-size:22px;color:#bbbbbb;font-weight:400;letter-spacing:2.502px;">UTF-8</div>
<div class="t " style="left:2688.7px;top:1588px;font-size:22px;color:#bbbbbb;font-weight:400;letter-spacing:2.107px;">4 spaces</div>
<svg style="left:2814px;top:1586px;" width="23" height="22" viewBox="0 0 23 22"><rect x="6" y="10" width="17" height="12" fill="#afb1b3"/><path d="M1.5 10V5A4 4 0 0 1 9.5 5V10" fill="none" stroke="#afb1b3" stroke-width="2.4"/></svg>
<svg style="left:2863px;top:1584px;" width="26" height="26" viewBox="0 0 26 26"><path d="M6 1H20L21 8H25V10H1V8H5Z" fill="#afb1b3"/><path d="M4.5 11.5H21.5V15A8.5 7.5 0 0 1 4.5 15Z" fill="none" stroke="#afb1b3" stroke-width="2"/><circle cx="9.5" cy="15" r="1.6" fill="#afb1b3"/><circle cx="16.5" cy="15" r="1.6" fill="#afb1b3"/><path d="M9.5 19Q13 21.5 16.5 19" stroke="#afb1b3" stroke-width="1.6" fill="none"/><path d="M2 26Q3 21 8 21.5L13 24L18 21.5Q23 21 24 26Z" fill="#afb1b3"/></svg>
</div></div>
<div style="left:111px;top:75px;width:2801px;height:1543px;border-radius:11px;box-sizing:border-box;border:1px solid rgba(0,0,0,.72);"></div>
<div style="left:122px;top:76px;width:2779px;height:2px;background:linear-gradient(rgba(255,255,255,.26),rgba(255,255,255,.08));"></div>
</div>
</body></html>
